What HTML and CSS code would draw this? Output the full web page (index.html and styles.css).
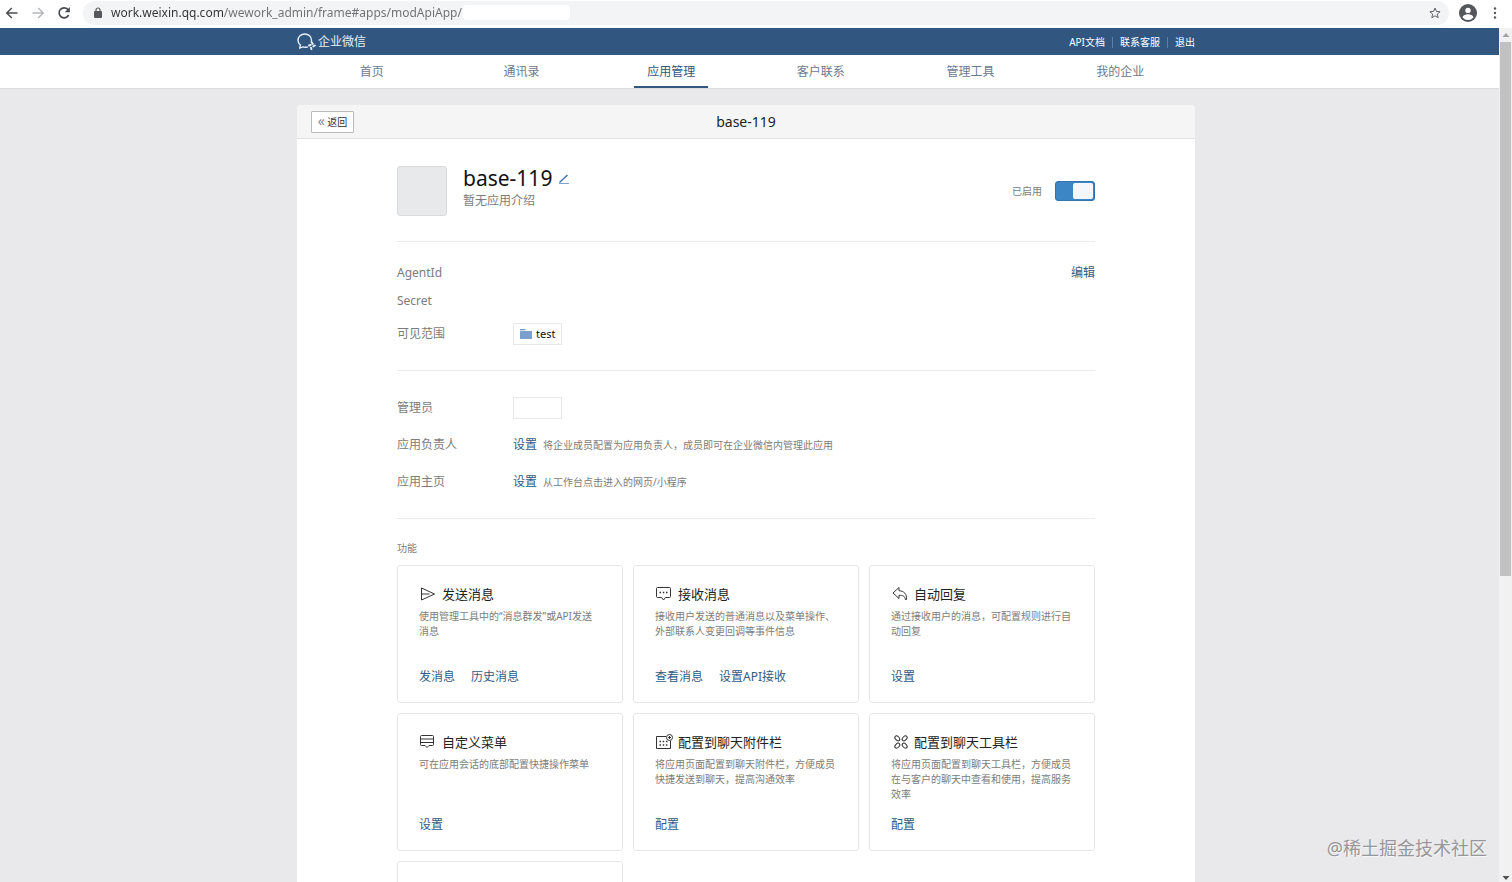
FILE: index.html
```html
<!DOCTYPE html>
<html lang="zh-CN">
<head>
  <meta charset="UTF-8">
  <meta name="viewport" content="width=device-width, initial-scale=1.0">
  <title>企业微信</title>
  <link rel="stylesheet" href="styles.css">
</head>
<body>

<div class="browser-bar">
  <button class="bar-btn" aria-label="后退">
    <svg width="14" height="14" viewBox="0 0 14 14"><path d="M12.5 7H2M6.8 2L1.8 7l5 5" fill="none" stroke="#4a4d51" stroke-width="1.5"/></svg>
  </button>
  <button class="bar-btn" aria-label="前进">
    <svg width="14" height="14" viewBox="0 0 14 14"><path d="M1.5 7H12M7.2 2l5 5-5 5" fill="none" stroke="#b4b6b9" stroke-width="1.4"/></svg>
  </button>
  <button class="bar-btn" aria-label="刷新">
    <svg width="14" height="14" viewBox="0 0 14 14"><path d="M11.6 9a5 5 0 1 1-.8-5.6L12 4.6" fill="none" stroke="#4a4d51" stroke-width="1.7"/><path d="M12.9 1v5.2H7.7z" fill="#4a4d51"/></svg>
  </button>
  <div class="address">
    <svg width="8" height="11" viewBox="0 0 8 11"><path d="M2 5V3a2 2 0 0 1 4 0v2" fill="none" stroke="#54575b" stroke-width="1.2"/><rect y="4" width="8" height="7" rx="1" fill="#54575b"/></svg>
    <input class="url" type="text" aria-label="地址" value="work.weixin.qq.com/wework_admin/frame#apps/modApiApp/">
    <span class="url-blank"></span>
    <button class="star" aria-label="收藏">
      <svg width="12" height="12" viewBox="0 0 12 12"><path d="M6 1l1.4 3.4 3.7.3-2.8 2.4.9 3.6L6 8.8l-3.2 1.9.9-3.6L.9 4.7l3.7-.3z" fill="none" stroke="#5f6368" stroke-width="1"/></svg>
    </button>
  </div>
  <button class="bar-btn" aria-label="用户">
    <svg width="18" height="18" viewBox="0 0 18 18"><circle cx="9" cy="9" r="9" fill="#54575b"/><circle cx="9" cy="6.4" r="2.7" fill="#fff"/><path d="M3.6 13.4c0-2 3.4-3.2 5.4-3.2s5.4 1.2 5.4 3.2A7 7 0 0 1 9 15.9a7 7 0 0 1-5.4-2.5z" fill="#fff"/></svg>
  </button>
  <button class="bar-btn bar-more" aria-label="更多">
    <svg width="4" height="14" viewBox="0 0 4 14" fill="#54575b"><circle cx="2" cy="2.5" r="1.2"/><circle cx="2" cy="7" r="1.2"/><circle cx="2" cy="11.5" r="1.2"/></svg>
  </button>
</div>

<div class="viewport">
  <div class="page">
    <header class="top">
      <div class="wrap top-inner">
        <a class="logo" href="#">
          <svg width="19" height="17" viewBox="0 0 19 17" fill="none" stroke="#e6eef6" stroke-width="1.4"><path d="M10.8 13.8c-1.6.6-3.3.6-4.8.1l-3.2 1 .5-2.8A6.5 6.5 0 0 1 1 7.4C1 3.6 4 1 7.8 1s6.7 2.6 6.7 6.2v1.6"/><path d="M14.6 9.3l1.2 1.6M12 12.5l1.7-.7M13.9 14.6l.5 1.6M16.3 13.4l1.6-.9" stroke-width="1.9" stroke-linecap="round"/></svg>
          <span>企业微信</span>
        </a>
        <div class="top-links">
          <a href="#">API文档</a>
          <a href="#">联系客服</a>
          <a href="#">退出</a>
        </div>
      </div>
    </header>

    <nav class="nav">
      <div class="wrap nav-inner">
        <a href="#">首页</a>
        <a href="#">通讯录</a>
        <a class="active" href="#">应用管理</a>
        <a href="#">客户联系</a>
        <a href="#">管理工具</a>
        <a href="#">我的企业</a>
      </div>
    </nav>

    <main class="main">
      <div class="wrap panel">
        <div class="panel-head">
          <button class="back"><span>«</span> 返回</button>
          <h1>base-119</h1>
        </div>

        <div class="panel-body">
          <section class="app-info">
            <div class="avatar"></div>
            <div class="app-text">
              <h2>base-119
                <button class="edit-name" aria-label="修改名称">
                  <svg width="12" height="12" viewBox="0 0 12 12"><path d="M1.5 9.5L9.5 2" stroke="#3f74ad" stroke-width="1.5"/><path d="M1 10.5h10" stroke="#7fa3c9" stroke-width="1"/></svg>
                </button>
              </h2>
              <p>暂无应用介绍</p>
            </div>
            <label class="enable">已启用 <input type="checkbox" checked></label>
          </section>

          <section class="rows">
            <div class="row row-short">
              <span class="name">AgentId</span>
              <a class="edit" href="#">编辑</a>
            </div>
            <div class="row row-short">
              <span class="name">Secret</span>
            </div>
            <div class="row">
              <span class="name">可见范围</span>
              <span class="tag">
                <svg width="12" height="10" viewBox="0 0 12 10"><path d="M0 0h5l1 1.3H0z" fill="#6b94c4"/><path d="M0 2h12v8H0z" fill="#7ba0cd"/></svg>
                test
              </span>
            </div>
          </section>

          <section class="rows">
            <div class="row">
              <span class="name">管理员</span>
              <span class="tag tag-empty"></span>
            </div>
            <div class="row">
              <span class="name">应用负责人</span>
              <a href="#">设置</a>
              <span class="hint">将企业成员配置为应用负责人，成员即可在企业微信内管理此应用</span>
            </div>
            <div class="row">
              <span class="name">应用主页</span>
              <a href="#">设置</a>
              <span class="hint">从工作台点击进入的网页/小程序</span>
            </div>
          </section>

          <section class="features">
            <h3>功能</h3>
            <div class="grid">
              <div class="card">
                <h4>
                  <svg width="18" height="16" viewBox="0 0 18 16" fill="none" stroke="#333"><path d="M2.5 2l13 6-13 6zM2.5 8h8"/></svg>
                  发送消息
                </h4>
                <p>使用管理工具中的“消息群发”或API发送消息</p>
                <div class="links"><a href="#">发消息</a><a href="#">历史消息</a></div>
              </div>
              <div class="card">
                <h4>
                  <svg width="18" height="16" viewBox="0 0 18 16" fill="none" stroke="#333"><path d="M2.5 1.5h12a1 1 0 0 1 1 1v8a1 1 0 0 1-1 1h-4l-2 2.5-2-2.5h-4a1 1 0 0 1-1-1v-8a1 1 0 0 1 1-1z"/><path d="M4.5 6.5H6M7.8 6.5h1.5M11 6.5h1.5" stroke-width="1.5"/></svg>
                  接收消息
                </h4>
                <p>接收用户发送的普通消息以及菜单操作、外部联系人变更回调等事件信息</p>
                <div class="links"><a href="#">查看消息</a><a href="#">设置API接收</a></div>
              </div>
              <div class="card">
                <h4>
                  <svg width="18" height="16" viewBox="0 0 18 16" fill="none" stroke="#333" stroke-linejoin="round"><path d="M8 1.5L2 7l6 5.5V9.3c4 0 5.8.6 6.3 4.2h1.2C16 8 13 5 8 4.7z"/></svg>
                  自动回复
                </h4>
                <p>通过接收用户的消息，可配置规则进行自动回复</p>
                <div class="links"><a href="#">设置</a></div>
              </div>
              <div class="card">
                <h4>
                  <svg width="18" height="16" viewBox="0 0 18 16" fill="none" stroke="#333"><path d="M2.5 1.5h11a1 1 0 0 1 1 1v8a1 1 0 0 1-1 1H10l-2 2-2-2H2.5a1 1 0 0 1-1-1v-8a1 1 0 0 1 1-1zM1.5 5h13M1.5 8.5h13"/></svg>
                  自定义菜单
                </h4>
                <p>可在应用会话的底部配置快捷操作菜单</p>
                <div class="links"><a href="#">设置</a></div>
              </div>
              <div class="card">
                <h4>
                  <svg width="18" height="16" viewBox="0 0 18 16" fill="none" stroke="#333"><path d="M11 2.5H1.5v12h14V7"/><circle cx="14.5" cy="3.5" r="3"/><path d="M13 3.5h3M14.5 2v3"/><path d="M4.500 7.5h8M4.500 11h8" stroke-width="1.5" stroke-dasharray="1.5 1.7"/></svg>
                  配置到聊天附件栏
                </h4>
                <p>将应用页面配置到聊天附件栏，方便成员快捷发送到聊天，提高沟通效率</p>
                <div class="links"><a href="#">配置</a></div>
              </div>
              <div class="card">
                <h4>
                  <svg width="18" height="16" viewBox="0 0 18 16" fill="none" stroke="#333"><g transform="translate(10 8)"><ellipse cx="5.2" rx="2.9" ry="1.9" transform="rotate(45)"/><ellipse cx="5.2" rx="2.9" ry="1.9" transform="rotate(135)"/><ellipse cx="5.2" rx="2.9" ry="1.9" transform="rotate(225)"/><ellipse cx="5.2" rx="2.9" ry="1.9" transform="rotate(315)"/></g></svg>
                  配置到聊天工具栏
                </h4>
                <p>将应用页面配置到聊天工具栏，方便成员在与客户的聊天中查看和使用，提高服务效率</p>
                <div class="links"><a href="#">配置</a></div>
              </div>
              <div class="card"></div>
            </div>
          </section>
        </div>
      </div>
    </main>
    <div class="watermark">@稀土掘金技术社区</div>
  </div>

  <div class="scrollbar">
    <svg width="13" height="14" viewBox="0 0 13 14"><path d="M3.5 9h7L7 5z" fill="#a3a3a3"/></svg>
    <div class="thumb"></div>
    <svg class="down" width="13" height="8" viewBox="0 0 13 8"><path d="M3.5 2h7L7 6z" fill="#505050"/></svg>
  </div>
</div>

</body>
</html>
```
FILE: styles.css
```css
* {
  box-sizing: border-box;
}
body {
  display: flex;
  flex-direction: column;
  height: 100vh;
  margin: 0;
  overflow: hidden;
  font-family: "Noto Sans", "Noto Sans CJK SC", sans-serif;
  font-size: 12px;
  line-height: 20px;
  color: #7c7c7c;
  background: #fff;
}
h1, h2, h3, h4, p {
  margin: 0;
  font-weight: normal;
}
a {
  color: #2f5b85;
  text-decoration: none;
}
button {
  padding: 0;
  border: none;
  background: none;
  font-family: inherit;
  cursor: pointer;
}
svg {
  display: block;
  flex: none;
}

/* Browser bar */
.browser-bar {
  display: flex;
  align-items: center;
  gap: 12px;
  height: 28px;
  flex: none;
  padding: 0 15px 3px 5px;
}
.bar-more {
  margin-left: 4px;
}
.address {
  display: flex;
  align-items: center;
  flex: 1;
  height: 24px;
  margin-right: -2px;
  padding: 0 8px 0 11px;
  border-radius: 12px;
  background: #f3f4f5;
}
.url {
  width: 352px;
  margin-left: 9px;
  padding: 0;
  border: none;
  outline: none;
  font-family: inherit;
  font-size: 12px;
  /* host part darker than the path */
  background: linear-gradient(to right, #333 112px, #6c6f73 112px);
  background-clip: text;
  color: transparent;
}
.url-blank {
  width: 107px;
  height: 15px;
  border-radius: 4px;
  background: #fff;
}
.star {
  margin-left: auto;
}

/* Page and scrollbar */
.viewport {
  display: flex;
  flex: 1;
  min-height: 0;
}
.page {
  position: relative;
  flex: 1;
  overflow: hidden;
  background: #e9e9eb;
}
.wrap {
  max-width: 898px;
  margin: 0 auto;
}
.top, .nav, .main {
  padding-right: 7px;
}
.scrollbar {
  display: flex;
  flex-direction: column;
  width: 13px;
  background: #f1f1f1;
}
.thumb {
  height: 534px;
  margin: 0 1px;
  background: #c1c1c1;
}
.down {
  margin-top: auto;
}

/* Header */
.top {
  background: #315781;
}
.top-inner {
  display: flex;
  justify-content: space-between;
  align-items: center;
  height: 27px;
}
.logo {
  display: flex;
  align-items: center;
  gap: 2px;
  color: #e6eef6;
}
.top-links {
  display: flex;
  font-size: 10px;
}
.top-links a {
  color: #fff;
}
.top-links a + a {
  position: relative;
  margin-left: 15px;
}
.top-links a + a::before {
  content: "";
  position: absolute;
  left: -8px;
  top: 5px;
  width: 1px;
  height: 11px;
  background: #5d80a8;
}
.nav {
  border-bottom: 1px solid #dcdcde;
  background: #fff;
}
.nav-inner {
  display: grid;
  grid-template-columns: repeat(6, 1fr);
  justify-items: center;
}
.nav a {
  height: 33px;
  padding: 0 13px;
  line-height: 33px;
  color: #6b7a90;
}
.nav .active {
  border-bottom: 2px solid #315781;
  color: #315781;
}

/* Panel */
.main {
  padding-top: 16px;
}
.panel {
  border-radius: 4px 4px 0 0;
  background: #fff;
}
.panel-head {
  display: grid;
  grid-template-columns: 1fr auto 1fr;
  align-items: center;
  height: 34px;
  padding: 0 14px;
  border-bottom: 1px solid #e0e1e2;
  border-radius: 4px 4px 0 0;
  background: #f5f5f5;
}
.panel-head h1 {
  font-size: 14px;
  color: #222;
}
.back {
  justify-self: start;
  width: 43px;
  height: 22px;
  border: 1px solid #bbb;
  border-radius: 1px;
  background: #fff;
  font-size: 10px;
  color: #333;
}
.back span {
  font-size: 14px;
  line-height: 14px;
  color: #888;
}
.panel-body {
  padding: 0 100px;
}
.app-info {
  display: flex;
  align-items: center;
  gap: 16px;
  padding: 27px 0 25px;
  border-bottom: 1px solid #ececec;
}
.avatar {
  width: 50px;
  height: 50px;
  border: 1px solid #d9dadc;
  border-radius: 3px;
  background: #e8e9eb;
}
.app-text {
  align-self: flex-start;
}
.app-text h2 {
  display: flex;
  align-items: center;
  gap: 6px;
  font-size: 21px;
  line-height: 25px;
  color: #111;
}
.enable {
  display: flex;
  align-items: center;
  gap: 13px;
  margin-left: auto;
  font-size: 10px;
}
.enable input {
  appearance: none;
  display: flex;
  justify-content: flex-end;
  width: 40px;
  height: 20px;
  margin: 0;
  padding: 1px;
  border: 1px solid #3373b0;
  border-radius: 3px;
  background: #3c86c6;
}
.enable input::before {
  content: "";
  width: 20px;
  border-radius: 2px;
  background: #f3f6fb;
}

/* Setting rows */
.rows {
  padding: 18px 0;
  border-bottom: 1px solid #ececec;
}
.row {
  display: flex;
  align-items: center;
  height: 37px;
}
.row-short {
  height: 28px;
}
.row-short:first-child {
  margin-top: -1px;
}
.name {
  width: 116px;
}
.edit {
  margin-left: auto;
}
.hint {
  margin-left: 6px;
  font-size: 10px;
}
.tag {
  display: flex;
  align-items: center;
  gap: 4px;
  height: 22px;
  padding: 0 6px;
  border: 1px solid #e8e8ea;
  font-size: 11px;
  color: #111;
}
.tag-empty {
  width: 49px;
}

/* Feature cards */
.features {
  padding-top: 19px;
}
.features h3 {
  margin-bottom: 7px;
  font-size: 10px;
}
.grid {
  display: grid;
  grid-template-columns: repeat(3, 1fr);
  gap: 10px;
}
.card {
  display: flex;
  flex-direction: column;
  height: 138px;
  padding: 18px 21px 15px;
  border: 1px solid #e6e7e9;
  border-radius: 3px;
}
.card h4 {
  display: flex;
  align-items: center;
  gap: 5px;
  font-size: 13px;
  color: #222;
}
.card p {
  margin-top: 5px;
  font-size: 10px;
  line-height: 15px;
}
.links {
  display: flex;
  gap: 16px;
  margin-top: auto;
}

.watermark {
  position: absolute;
  right: 12px;
  bottom: 22px;
  font-size: 18px;
  line-height: 24px;
  color: #96979a;
  text-shadow: 1px 1px 0 #f6f6f7;
}
```
